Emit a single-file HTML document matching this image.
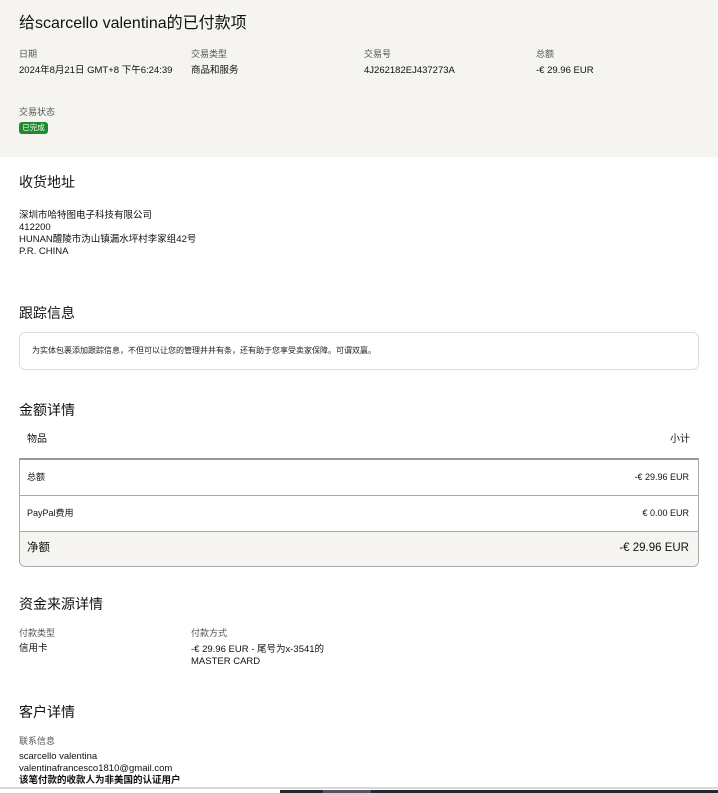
<!DOCTYPE html>
<html><head><meta charset="utf-8"><style>
*{margin:0;padding:0;box-sizing:border-box}
body{width:718px;height:793px;position:relative;overflow:hidden;background:#fff;font-family:"Liberation Sans","Noto Sans CJK SC",sans-serif;color:#111}
.a{position:absolute;white-space:nowrap;line-height:1}
.hdr{position:absolute;left:0;top:0;width:718px;height:157px;background:#f5f4f1}
.lbl{font-size:9px;color:#555}
.val{font-size:9.5px;color:#111}
.h2{font-size:14px;color:#111}
.box{position:absolute;border:1px solid #ddd;border-radius:6px}
</style></head><body>
<div class="hdr"></div>
<div class="a" style="left:19px;top:16px;font-size:16px">给scarcello valentina的已付款项</div>
<div class="a lbl" style="left:19px;top:50px">日期</div>
<div class="a val" style="left:19px;top:66px">2024年8月21日 GMT+8 下午6:24:39</div>
<div class="a lbl" style="left:191px;top:50px">交易类型</div>
<div class="a val" style="left:191px;top:66px">商品和服务</div>
<div class="a lbl" style="left:364px;top:50px">交易号</div>
<div class="a val" style="left:364px;top:66px">4J262182EJ437273A</div>
<div class="a lbl" style="left:536px;top:50px">总额</div>
<div class="a val" style="left:536px;top:66px">-€ 29.96 EUR</div>
<div class="a lbl" style="left:19px;top:108px">交易状态</div>
<div class="a" style="left:19px;top:122px;width:29px;height:12px;background:#1f8a2e;border-radius:3px;color:#fff;font-size:7.5px;line-height:12px;text-align:center">已完成</div>

<div class="a h2" style="left:19px;top:175px">收货地址</div>
<div class="a val" style="left:19px;top:210px;line-height:12px">深圳市哈特图电子科技有限公司<br>412200<br>HUNAN醴陵市沩山镇漏水坪村李家组42号<br>P.R. CHINA</div>

<div class="a h2" style="left:19px;top:306px">跟踪信息</div>
<div class="box" style="left:19px;top:332px;width:680px;height:38px"></div>
<div class="a" style="left:32px;top:347px;font-size:8px;color:#222">为实体包裹添加跟踪信息，不但可以让您的管理井井有条，还有助于您享受卖家保障。可谓双赢。</div>

<div class="a h2" style="left:19px;top:403px">金额详情</div>
<div class="a" style="left:27px;top:435px;font-size:10px">物品</div>
<div class="a" style="right:28px;top:435px;font-size:10px">小计</div>
<div class="box" style="left:19px;top:458px;width:680px;height:109px;border-color:#aaa;border-top:2px solid #999;overflow:hidden;border-radius:0 0 6px 6px">
 <div style="position:absolute;left:0;top:71px;width:100%;height:38px;background:#f5f4f1"></div>
 <div style="position:absolute;left:0;top:35px;width:100%;height:1px;background:#aaa"></div>
 <div style="position:absolute;left:0;top:71px;width:100%;height:1px;background:#aaa"></div>
</div>
<div class="a" style="left:27px;top:473px;font-size:9px">总额</div>
<div class="a" style="right:29px;top:473px;font-size:9px">-€ 29.96 EUR</div>
<div class="a" style="left:27px;top:509px;font-size:9px">PayPal费用</div>
<div class="a" style="right:29px;top:509px;font-size:9px">€ 0.00 EUR</div>
<div class="a" style="left:27px;top:543px;font-size:11.5px">净额</div>
<div class="a" style="right:29px;top:543px;font-size:11.5px">-€ 29.96 EUR</div>

<div class="a h2" style="left:19px;top:597px">资金来源详情</div>
<div class="a lbl" style="left:19px;top:629px">付款类型</div>
<div class="a val" style="left:19px;top:644px">信用卡</div>
<div class="a lbl" style="left:191px;top:629px">付款方式</div>
<div class="a val" style="left:191px;top:644px;line-height:12px">-€ 29.96 EUR - 尾号为x-3541的<br>MASTER CARD</div>

<div class="a h2" style="left:19px;top:705px">客户详情</div>
<div class="a lbl" style="left:19px;top:737px">联系信息</div>
<div class="a val" style="left:19px;top:751px;line-height:12px">scarcello valentina<br>valentinafrancesco1810@gmail.com<br><b>该笔付款的收款人为非美国的认证用户</b></div>

<div style="position:absolute;left:0;top:787px;width:718px;height:2px;background:#d8d8d8"></div>
<div style="position:absolute;left:280px;top:790px;width:438px;height:3px;background:#222a2e"></div>
<div style="position:absolute;left:323px;top:790px;width:48px;height:3px;background:#556"></div>
</body></html>
